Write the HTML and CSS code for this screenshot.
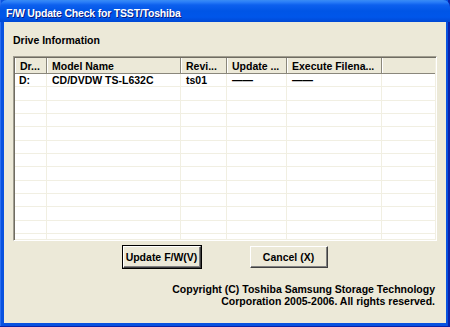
FILE: index.html
```html
<!DOCTYPE html>
<html lang="en">
<head>
    <meta charset="UTF-8">
    <title>F/W Update Check for TSST/Toshiba</title>
    <link rel="stylesheet" href="styles.css">
</head>
<body>
    <div class="window">
        <div class="titlebar">F/W Update Check for TSST/Toshiba</div>
        <div class="client">
            <div class="group-label">Drive Information</div>
            <div class="listview">
                <table class="drives">
                    <colgroup>
                        <col style="width:32px">
                        <col style="width:134px">
                        <col style="width:46px">
                        <col style="width:60px">
                        <col style="width:95px">
                        <col>
                    </colgroup>
                    <thead>
                        <tr>
                            <th>Dr...</th>
                            <th>Model Name</th>
                            <th>Revi...</th>
                            <th>Update ...</th>
                            <th>Execute Filena...</th>
                            <th></th>
                        </tr>
                    </thead>
                    <tbody>
                        <tr>
                            <td>D:</td>
                            <td>CD/DVDW TS-L632C</td>
                            <td>ts01</td>
                            <td>——</td>
                            <td>——</td>
                            <td></td>
                        </tr>
                        <tr><td></td><td></td><td></td><td></td><td></td><td></td></tr>
                        <tr><td></td><td></td><td></td><td></td><td></td><td></td></tr>
                        <tr><td></td><td></td><td></td><td></td><td></td><td></td></tr>
                        <tr><td></td><td></td><td></td><td></td><td></td><td></td></tr>
                        <tr><td></td><td></td><td></td><td></td><td></td><td></td></tr>
                        <tr><td></td><td></td><td></td><td></td><td></td><td></td></tr>
                        <tr><td></td><td></td><td></td><td></td><td></td><td></td></tr>
                        <tr><td></td><td></td><td></td><td></td><td></td><td></td></tr>
                        <tr><td></td><td></td><td></td><td></td><td></td><td></td></tr>
                        <tr><td></td><td></td><td></td><td></td><td></td><td></td></tr>
                        <tr><td></td><td></td><td></td><td></td><td></td><td></td></tr>
                        <tr><td></td><td></td><td></td><td></td><td></td><td></td></tr>
                    </tbody>
                </table>
            </div>
            <div class="buttons">
                <button class="btn default">Update F/W(V)</button>
                <button class="btn">Cancel (X)</button>
            </div>
            <div class="copyright">
                Copyright (C) Toshiba Samsung Storage Technology<br>
                Corporation 2005-2006. All rights reserved.
            </div>
        </div>
    </div>
</body>
</html>
```

FILE: styles.css
```css
body {
    margin: 0;
    padding: 0;
    background-color: #ece9d8;
    font-family: "Liberation Sans", Arial, sans-serif;
    font-size: 10.5px;
    font-weight: bold;
    color: #000;
}
.window {
    width: 450px;
    height: 327px;
    box-sizing: border-box;
    padding: 0 4px 4px 4px;
    background-color: #0852e0;
    box-shadow: inset -2px -1px 0 #0a22a8, inset 1px 0 0 #2c6ff0;
    display: flex;
    flex-direction: column;
}
.titlebar {
    height: 22px;
    margin: 0 -4px;
    padding-left: 6px;
    box-sizing: border-box;
    background: linear-gradient(to bottom, #3a8cf5 0, #2a7ef8 2px, #0d60ee 5px, #0055e6 11px, #0056ea 17px, #0048d4 22px);
    border-radius: 7px 7px 0 0;
    color: #fff;
    font-size: 10.5px;
    letter-spacing: -0.2px;
    line-height: 26px;
    text-shadow: 1px 1px 0 #0a1a80;
}
.client {
    flex: 1;
    background-color: #ece9d8;
    padding: 12px 11px 0 9px;
    display: flex;
    flex-direction: column;
}
.group-label {
    line-height: 13px;
    margin-bottom: 9px;
}
.listview {
    width: 424px;
    height: 185px;
    box-sizing: border-box;
    overflow: hidden;
    background-color: #fff;
    border-top: 1px solid #a09d8f;
    border-left: 1px solid #a09d8f;
    border-right: 1px solid #fff;
    border-bottom: 1px solid #fff;
    box-shadow: inset 1px 1px 0 #6f6c62, inset -1px -1px 0 #f1efe2;
    padding: 1px;
}
.drives {
    width: 100%;
    table-layout: fixed;
    border-collapse: separate;
    border-spacing: 0;
}
.drives th {
    height: 16px;
    padding: 0 0 0 5px;
    text-align: left;
    font-weight: bold;
    white-space: nowrap;
    overflow: hidden;
    background-color: #ece9d8;
    border-right: 1px solid #8a877b;
    border-bottom: 1px solid #8a877b;
    box-shadow: inset 1px 0 0 #fff;
    box-sizing: border-box;
    line-height: 14px;
}
.drives th:last-child {
    border-right: none;
}
.drives tbody tr {
    height: 13.35px;
}
.drives td {
    padding: 0 0 0 5px;
    line-height: 12px;
    white-space: nowrap;
    overflow: hidden;
    border-right: 1px solid #f1efe2;
    border-bottom: 1px solid #f1efe2;
}
.drives td:first-child {
    padding-left: 4px;
}
.drives td:last-child {
    border-right: none;
}
.buttons {
    display: flex;
    justify-content: center;
    gap: 49px;
    margin-top: 5px;
    padding-left: 2px;
}
.btn {
    width: 78px;
    height: 22px;
    padding: 0;
    font-family: inherit;
    font-size: 10.5px;
    font-weight: bold;
    color: #000;
    background-color: #ece9d8;
    border: 1px solid #fff;
    border-right-color: #404040;
    border-bottom-color: #404040;
    box-shadow: inset -1px -1px 0 #808080;
    cursor: pointer;
}
.btn.default {
    outline: 1px solid #000;
    outline-offset: 0;
}
.copyright {
    margin-top: 15px;
    text-align: right;
    line-height: 12px;
}
```
